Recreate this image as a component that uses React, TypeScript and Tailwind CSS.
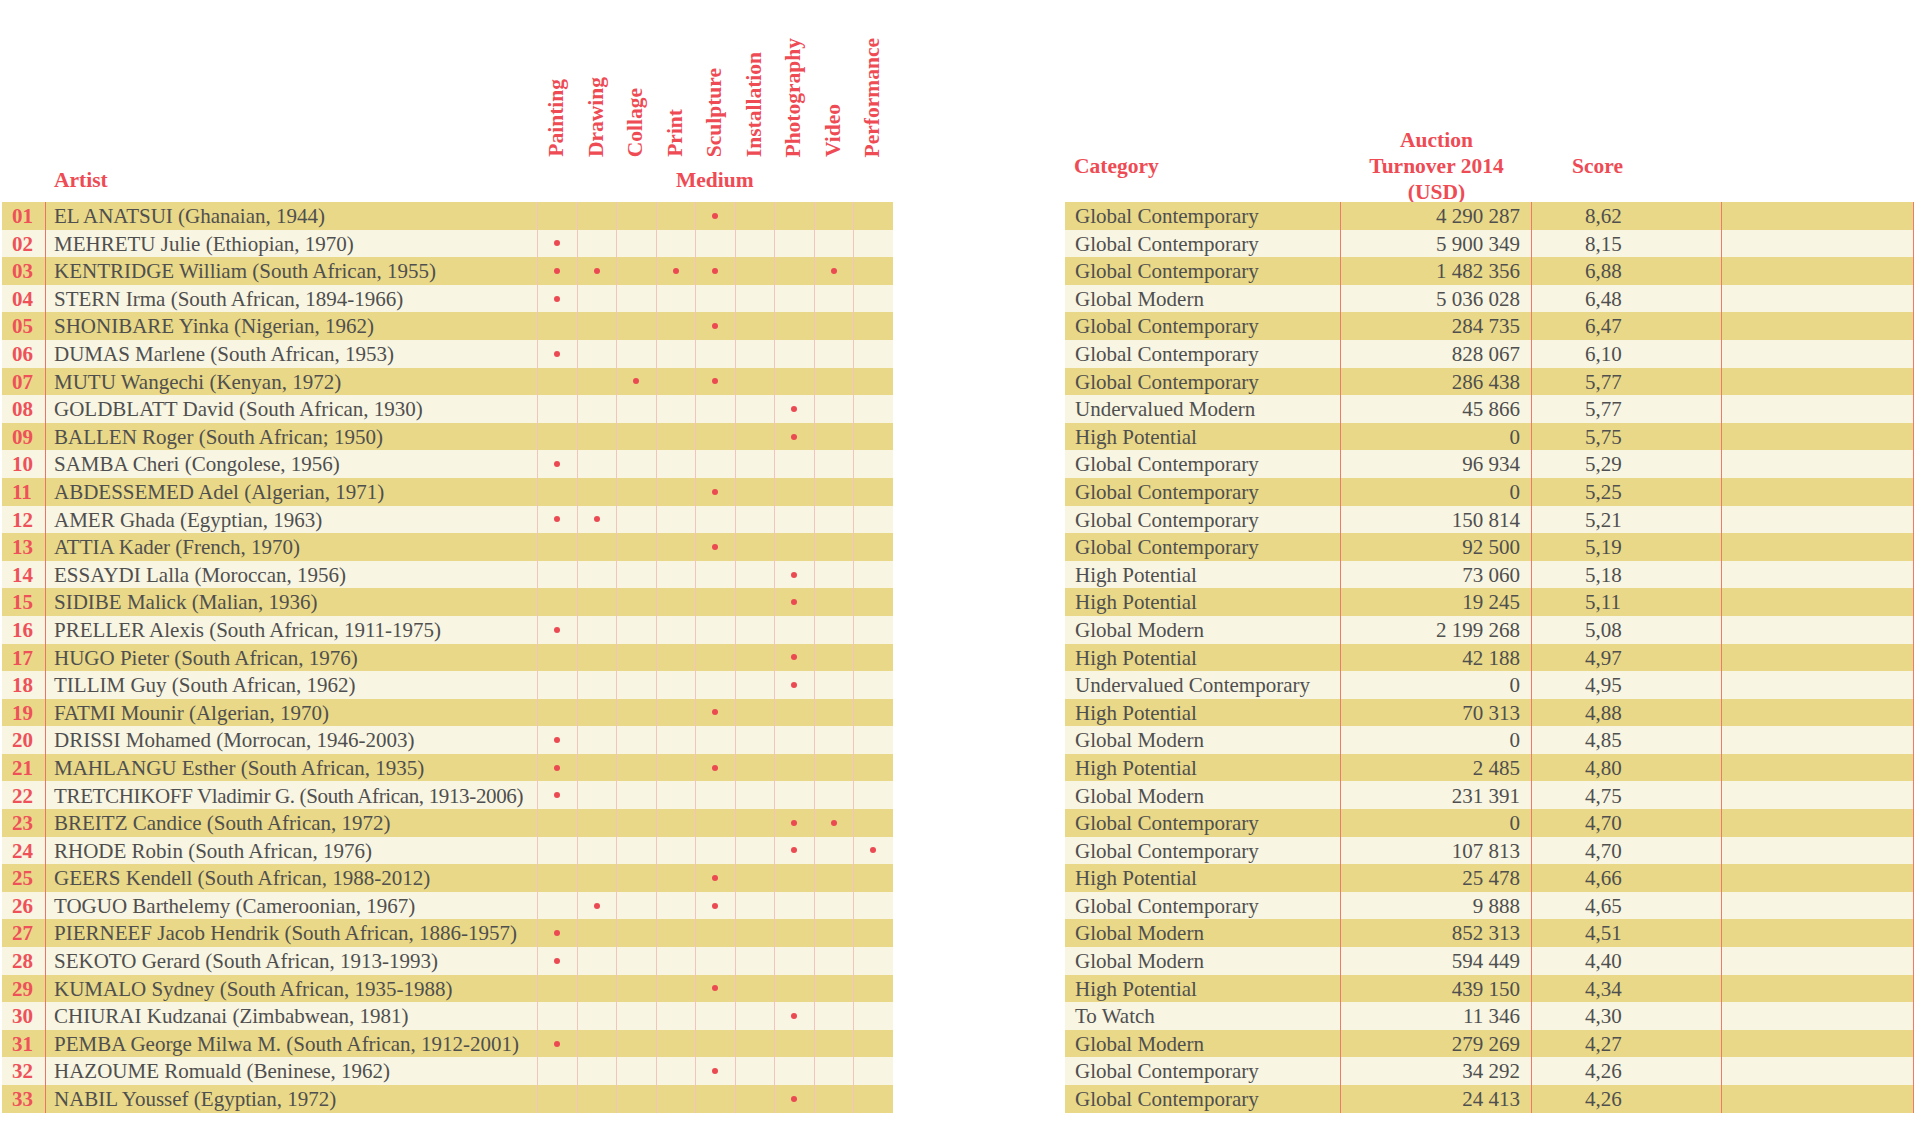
import React from "react";

type Row = {
  name: string;
  media: number[];
  category: string;
  turnover: string;
  score: string;
  tight?: boolean;
};

const MEDIA = [
  "Painting",
  "Drawing",
  "Collage",
  "Print",
  "Sculpture",
  "Installation",
  "Photography",
  "Video",
  "Performance",
];

const rows: Row[] = [
  { name: "EL ANATSUI (Ghanaian, 1944)", media: [4], category: "Global Contemporary", turnover: "4 290 287", score: "8,62" },
  { name: "MEHRETU Julie (Ethiopian, 1970)", media: [0], category: "Global Contemporary", turnover: "5 900 349", score: "8,15" },
  { name: "KENTRIDGE William (South African, 1955)", media: [0, 1, 3, 4, 7], category: "Global Contemporary", turnover: "1 482 356", score: "6,88" },
  { name: "STERN Irma (South African, 1894-1966)", media: [0], category: "Global Modern", turnover: "5 036 028", score: "6,48" },
  { name: "SHONIBARE Yinka (Nigerian, 1962)", media: [4], category: "Global Contemporary", turnover: "284 735", score: "6,47" },
  { name: "DUMAS Marlene (South African, 1953)", media: [0], category: "Global Contemporary", turnover: "828 067", score: "6,10" },
  { name: "MUTU Wangechi (Kenyan, 1972)", media: [2, 4], category: "Global Contemporary", turnover: "286 438", score: "5,77" },
  { name: "GOLDBLATT David (South African, 1930)", media: [6], category: "Undervalued Modern", turnover: "45 866", score: "5,77" },
  { name: "BALLEN Roger (South African; 1950)", media: [6], category: "High Potential", turnover: "0", score: "5,75" },
  { name: "SAMBA Cheri (Congolese, 1956)", media: [0], category: "Global Contemporary", turnover: "96 934", score: "5,29" },
  { name: "ABDESSEMED Adel (Algerian, 1971)", media: [4], category: "Global Contemporary", turnover: "0", score: "5,25" },
  { name: "AMER Ghada (Egyptian, 1963)", media: [0, 1], category: "Global Contemporary", turnover: "150 814", score: "5,21" },
  { name: "ATTIA Kader (French, 1970)", media: [4], category: "Global Contemporary", turnover: "92 500", score: "5,19" },
  { name: "ESSAYDI Lalla (Moroccan, 1956)", media: [6], category: "High Potential", turnover: "73 060", score: "5,18" },
  { name: "SIDIBE Malick (Malian, 1936)", media: [6], category: "High Potential", turnover: "19 245", score: "5,11" },
  { name: "PRELLER Alexis (South African, 1911-1975)", media: [0], category: "Global Modern", turnover: "2 199 268", score: "5,08" },
  { name: "HUGO Pieter (South African, 1976)", media: [6], category: "High Potential", turnover: "42 188", score: "4,97" },
  { name: "TILLIM Guy (South African, 1962)", media: [6], category: "Undervalued Contemporary", turnover: "0", score: "4,95" },
  { name: "FATMI Mounir (Algerian, 1970)", media: [4], category: "High Potential", turnover: "70 313", score: "4,88" },
  { name: "DRISSI Mohamed (Morrocan, 1946-2003)", media: [0], category: "Global Modern", turnover: "0", score: "4,85" },
  { name: "MAHLANGU Esther (South African, 1935)", media: [0, 4], category: "High Potential", turnover: "2 485", score: "4,80" },
  { name: "TRETCHIKOFF Vladimir G. (South African, 1913-2006)", media: [0], category: "Global Modern", turnover: "231 391", score: "4,75", tight: true },
  { name: "BREITZ Candice (South African, 1972)", media: [6, 7], category: "Global Contemporary", turnover: "0", score: "4,70" },
  { name: "RHODE Robin (South African, 1976)", media: [6, 8], category: "Global Contemporary", turnover: "107 813", score: "4,70" },
  { name: "GEERS Kendell (South African, 1988-2012)", media: [4], category: "High Potential", turnover: "25 478", score: "4,66" },
  { name: "TOGUO Barthelemy (Cameroonian, 1967)", media: [1, 4], category: "Global Contemporary", turnover: "9 888", score: "4,65" },
  { name: "PIERNEEF Jacob Hendrik (South African, 1886-1957)", media: [0], category: "Global Modern", turnover: "852 313", score: "4,51" },
  { name: "SEKOTO Gerard (South African, 1913-1993)", media: [0], category: "Global Modern", turnover: "594 449", score: "4,40" },
  { name: "KUMALO Sydney (South African, 1935-1988)", media: [4], category: "High Potential", turnover: "439 150", score: "4,34" },
  { name: "CHIURAI Kudzanai (Zimbabwean, 1981)", media: [6], category: "To Watch", turnover: "11 346", score: "4,30" },
  { name: "PEMBA George Milwa M. (South African, 1912-2001)", media: [0], category: "Global Modern", turnover: "279 269", score: "4,27" },
  { name: "HAZOUME Romuald (Beninese, 1962)", media: [4], category: "Global Contemporary", turnover: "34 292", score: "4,26" },
  { name: "NABIL Youssef (Egyptian, 1972)", media: [6], category: "Global Contemporary", turnover: "24 413", score: "4,26" },
];

const band = (i: number) => (i % 2 === 0 ? "bg-[#e9d887]" : "bg-[#f8f5e2]");

function ArtistTable() {
  return (
    <div className="ml-[2px] flex flex-col">
      {/* rotated medium labels */}
      <div className="flex h-[157px] items-end">
        <div className="w-[535px]" />
        {MEDIA.map((m) => (
          <div key={m} className="flex w-[39.5px] justify-center">
            <span className="rotate-180 text-[21.5px] leading-none font-bold text-[#ee4b55] [writing-mode:vertical-rl]">
              {m}
            </span>
          </div>
        ))}
      </div>
      <div className="flex h-[45px] items-center pt-[2px] text-[21.5px] font-bold text-[#ee4b55]">
        <div className="w-[535px] pl-[52px]">Artist</div>
        <div className="w-[355.5px] text-center">Medium</div>
      </div>

      {rows.map((r, i) => (
        <div key={r.name} className={`flex h-[27.6px] ${band(i)}`}>
          <div className="flex w-[44px] items-center border-r border-[#ea7467] pl-[10px] pt-[2px] text-[21px] font-bold text-[#ee5159]">
            {String(i + 1).padStart(2, "0")}
          </div>
          <div
            className={`flex w-[491px] items-center whitespace-nowrap pl-[8px] pt-[2px] text-[21px] text-[#4f4f4f] ${
              r.tight ? "tracking-[-0.35px]" : ""
            }`}
          >
            {r.name}
          </div>
          {MEDIA.map((m, k) => (
            <div key={m} className="flex w-[39.5px] items-center justify-center border-l border-[#f3c3bd]">
              {r.media.includes(k) && <span className="h-[6px] w-[6px] rounded-full bg-[#eb4a52]" />}
            </div>
          ))}
        </div>
      ))}
    </div>
  );
}

function ScoreTable() {
  return (
    <div className="flex flex-col">
      <div className="flex h-[202px] items-end">
        <div className="flex h-[72px] items-center text-[21.5px] font-bold text-[#ee4b55]">
          <div className="w-[276px] pl-[9px]">Category</div>
          <div className="w-[191px] text-center leading-[26px]">
            Auction
            <br />
            Turnover 2014
            <br />
            (USD)
          </div>
          <div className="w-[190px] pl-[40px]">Score</div>
          <div className="w-[192px]" />
        </div>
      </div>

      {rows.map((r, i) => (
        <div key={r.name} className={`flex h-[27.6px] text-[21px] text-[#4f4f4f] ${band(i)}`}>
          <div className="flex w-[276px] items-center whitespace-nowrap border-r border-[#ef7a6b] pl-[10px] pt-[2px]">
            {r.category}
          </div>
          <div className="flex w-[191px] items-center justify-end border-r border-[#ef7a6b] pr-[11px] pt-[2px]">
            {r.turnover}
          </div>
          <div className="flex w-[190px] items-center border-r border-[#ef7a6b] pl-[53px] pt-[2px]">{r.score}</div>
          <div className="w-[192px] border-r border-[#ef7a6b]" />
        </div>
      ))}
    </div>
  );
}

export default function App() {
  return (
    <div className="flex h-[1145px] w-[1920px] bg-white pr-[6px] font-['Liberation_Serif','Times_New_Roman',serif]">
      <ArtistTable />
      <div className="ml-auto">
        <ScoreTable />
      </div>
    </div>
  );
}
